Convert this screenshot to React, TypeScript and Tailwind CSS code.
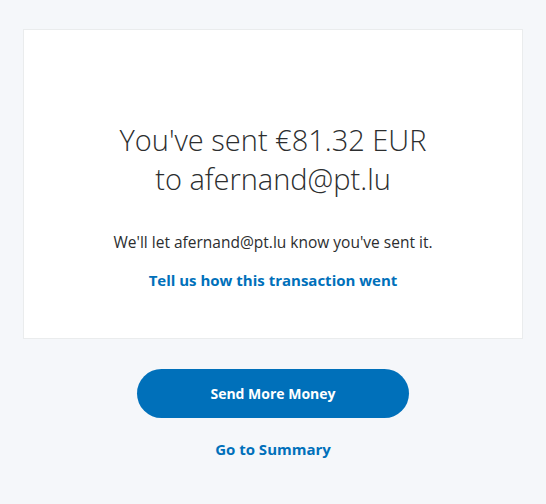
export default function App() {
  return (
    <div
      className="min-h-screen bg-[#f5f7fa] pt-[29px] text-[#2c2e2f]"
      style={{ fontFamily: '"Open Sans", "Liberation Sans", sans-serif' }}
    >
      <div className="mx-auto flex h-[310px] w-[500px] flex-col items-center border border-[#eaeced] bg-white pt-[90px]">
        <h1 className="text-center text-[29px] font-light leading-[39px] text-[#2c2e2f]">
          You've sent €81.32 EUR
          <br />
          to afernand@pt.lu
        </h1>
        <p className="mt-[34px] text-[15.5px] leading-[20px] text-[#2c2e2f]">
          We'll let afernand@pt.lu know you've sent it.
        </p>
        <a className="mt-[18px] text-[15px] font-bold leading-[20px] text-[#0070ba]" href="#">
          Tell us how this transaction went
        </a>
      </div>
      <div className="flex flex-col items-center">
        <button className="mt-[30px] h-[49px] w-[272px] rounded-full bg-[#0070ba] text-[14px] font-bold text-white">
          Send More Money
        </button>
        <a className="mt-[21px] text-[15px] font-bold leading-[20px] text-[#0070ba]" href="#">
          Go to Summary
        </a>
      </div>
    </div>
  );
}
